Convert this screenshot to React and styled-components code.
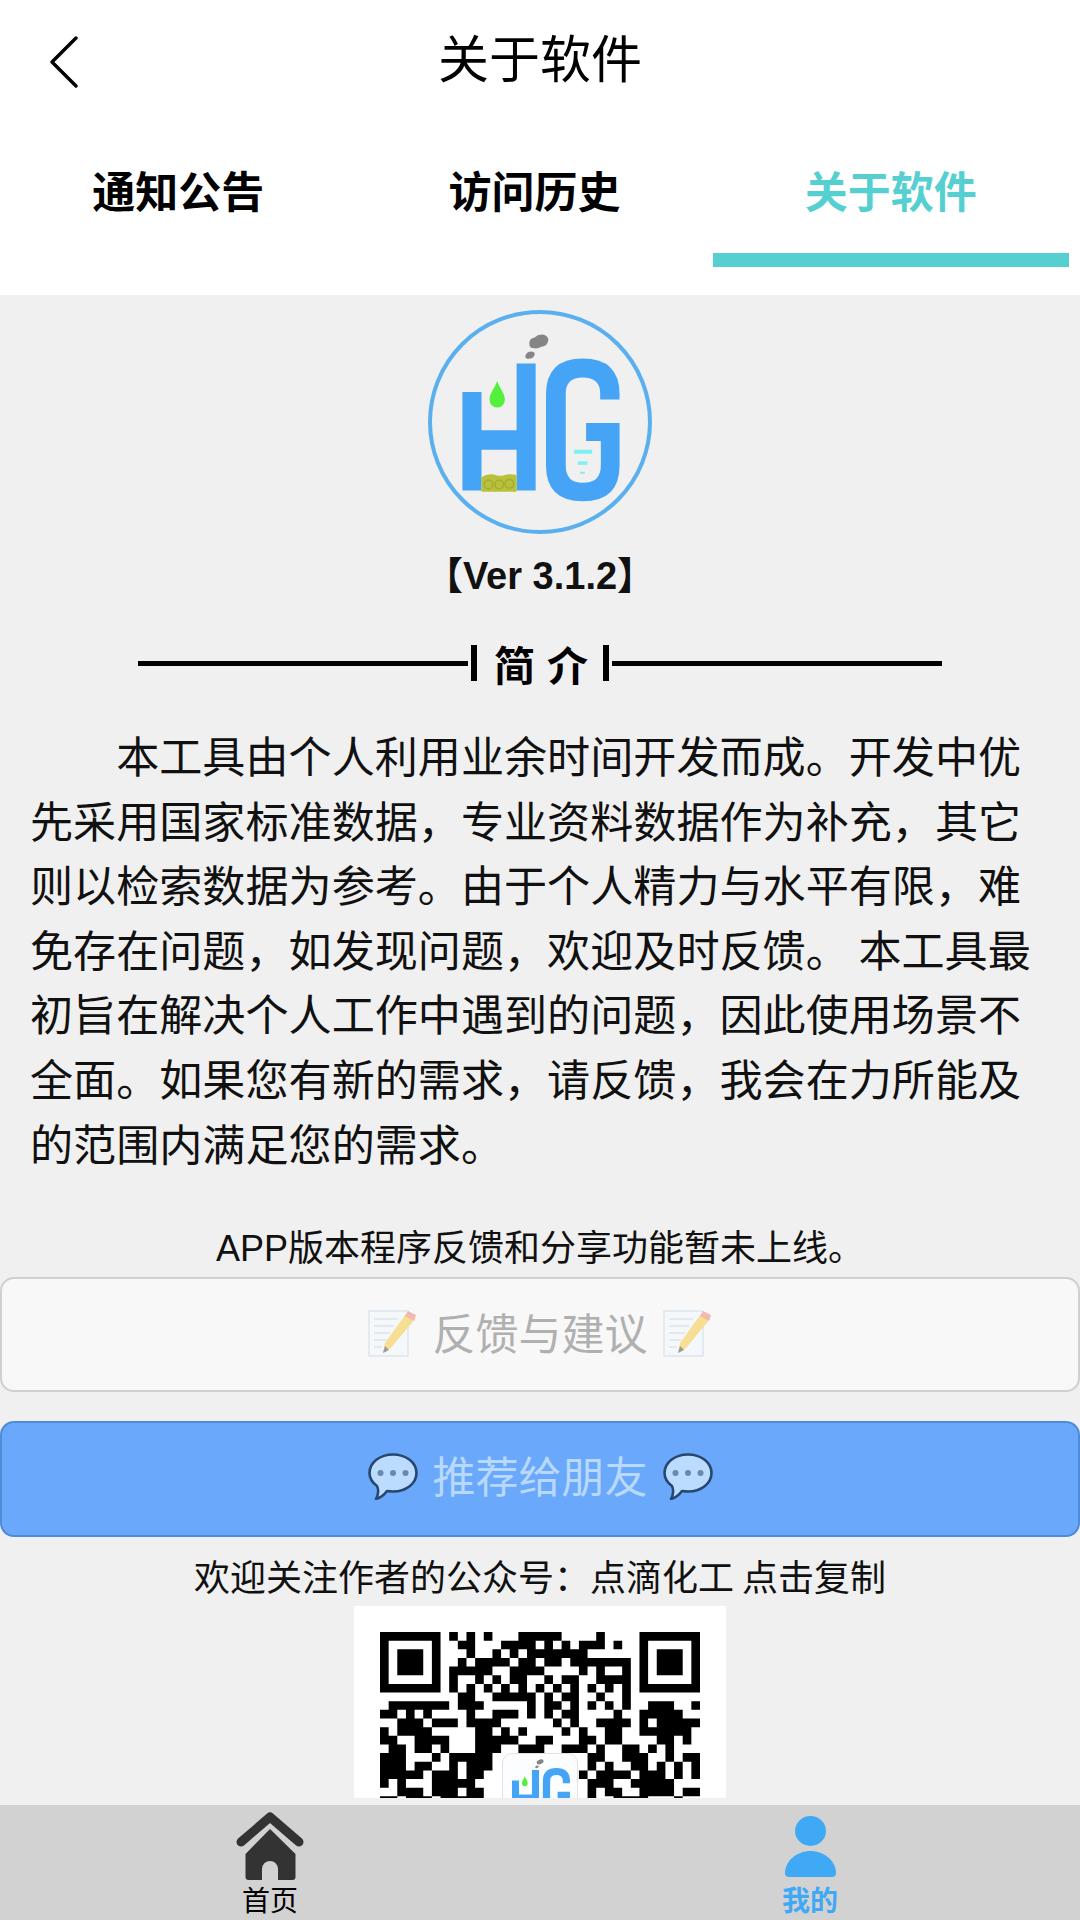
import React from 'react';
import styled, { createGlobalStyle } from 'styled-components';

const cjk = '"Noto Sans CJK SC", sans-serif';
const latinCjk = '"Liberation Sans", "Noto Sans CJK SC", sans-serif';

const GlobalStyle = createGlobalStyle`
  html, body {
    margin: 0;
    padding: 0;
    background: #f0f0f0;
  }
  * {
    box-sizing: border-box;
  }
`;

const Page = styled.div`
  width: 1080px;
  height: 1920px;
  display: flex;
  flex-direction: column;
  overflow: hidden;
  background: #f0f0f0;
  font-family: ${cjk};
  color: #000;
`;

const Header = styled.header`
  flex: none;
  height: 295px;
  background: #fff;
`;

const TitleBar = styled.div`
  height: 118px;
  display: grid;
  grid-template-columns: 1fr auto 1fr;
  align-items: center;
  padding: 0 50px;
`;

const BackIcon = styled.svg`
  width: 28px;
  height: 52px;
  margin-top: 6px;
`;

const Title = styled.h1`
  margin: 0 0 7px;
  font-size: 51px;
  line-height: 60px;
  font-weight: 400;
`;

const Tabs = styled.nav`
  width: 1069px;
  display: grid;
  grid-template-columns: repeat(3, 1fr);
`;

const Tab = styled.div`
  height: 149px;
  padding-top: 43px;
  text-align: center;
  font-size: 43px;
  line-height: 57px;
  font-weight: 700;
  color: ${(p) => (p.$active ? '#55cfd0' : '#000')};
  border-bottom: 14px solid ${(p) => (p.$active ? '#55cfd0' : 'transparent')};
`;

const Content = styled.main`
  flex: 1;
  min-height: 0;
  overflow: hidden;
  display: flex;
  flex-direction: column;
  align-items: center;
`;

const LogoBadge = styled.svg`
  flex: none;
  width: 224px;
  height: 224px;
  margin-top: 15px;
`;

const Version = styled.div`
  margin-top: 20px;
  font-family: ${latinCjk};
  font-size: 38px;
  line-height: 44px;
  font-weight: 700;
  color: #111;
`;

const Divider = styled.div`
  flex: none;
  height: 36px;
  margin-top: 47px;
  display: flex;
  align-items: center;
`;

const DividerLine = styled.span`
  width: 330px;
  height: 5px;
  background: #000;
`;

const DividerBar = styled.span`
  width: 6px;
  height: 36px;
  margin: 0 3px;
  background: #000;
`;

const DividerLabel = styled.span`
  margin: 0 14px;
  font-size: 41px;
  line-height: 36px;
  font-weight: 700;
  letter-spacing: 12px;
  margin-right: 0;
`;

const Intro = styled.p`
  width: 1020px;
  margin: 41px 0 0;
  font-size: 43.1px;
  line-height: 64.6px;
  text-indent: 2em;
  color: #111;
`;

const Notice = styled.div`
  margin-top: 52px;
  font-family: ${latinCjk};
  font-size: 36px;
  line-height: 46px;
  color: #111;
`;

const ActionButton = styled.div`
  flex: none;
  width: 1080px;
  height: ${(p) => (p.$primary ? '116px' : '115px')};
  margin-top: ${(p) => (p.$primary ? '29px' : '5px')};
  padding-bottom: ${(p) => (p.$primary ? '6px' : '3px')};
  display: flex;
  align-items: center;
  justify-content: center;
  gap: 15px;
  border-radius: 14px;
  border: 2px solid ${(p) => (p.$primary ? '#4f8bd6' : '#d0d0d0')};
  background: ${(p) => (p.$primary ? '#6aa8fb' : '#f8f8f8')};
  color: ${(p) => (p.$primary ? '#b9d9fb' : '#b0b0b0')};
  font-size: 43px;
  line-height: 60px;
`;

const ButtonLabel = styled.span`
  padding-bottom: 5px;
`;

const ButtonIcon = styled.svg`
  flex: none;
  width: 50px;
  height: 47px;
`;

const Follow = styled.div`
  margin-top: 16px;
  font-size: 36px;
  line-height: 44px;
  white-space: pre;
  color: #111;
`;

const QrCard = styled.div`
  position: relative;
  flex: none;
  width: 372px;
  height: 372px;
  margin-top: 9px;
  padding: 26px;
  background: #fff;
`;

const QrCode = styled.svg`
  display: block;
  width: 320px;
  height: 320px;
`;

const QrLogo = styled.div`
  position: absolute;
  left: 148px;
  top: 147px;
  width: 76px;
  height: 76px;
  border: 1px solid #e2e2e2;
  border-radius: 10px;
  background: #fbfdff;
`;

const QrLogoMark = styled.svg`
  display: block;
  width: 74px;
  height: 74px;
`;

const BottomBar = styled.footer`
  flex: none;
  height: 115px;
  margin-top: 7px;
  display: grid;
  grid-template-columns: 1fr 1fr;
  background: #d2d2d2;
`;

const BarItem = styled.div`
  display: flex;
  flex-direction: column;
  align-items: center;
  padding-top: 6px;
`;

const IconSlot = styled.div`
  height: 69px;
  display: flex;
  align-items: flex-start;
  justify-content: center;
`;

const HomeIcon = styled.svg`
  width: 68px;
  height: 70px;
`;

const PersonIcon = styled.svg`
  width: 51px;
  height: 61px;
  margin-top: 5px;
`;

const BarLabel = styled.span`
  font-size: 28px;
  line-height: 38px;
  font-weight: ${(p) => (p.$active ? 700 : 400)};
  color: ${(p) => (p.$active ? '#3fa9f5' : '#000')};
`;

// modules that are dark per row, read off the reference (rows below 19 are hidden)
const qrRows = [
  '0-6 8 10 12 16-20 25 30-36',
  '0 6 9-10 14-17 19 21 23-25 27 30 36',
  '0 2-4 6 10 13 15 17-23 30 32-34 36',
  '0 2-4 6 9 11-14 16-17 19-20 22-28 30 32-34 36',
  '0 2-4 6 8-12 15-18 23 25 28 30 32-34 36',
  '0 6 8 11 13 15-16 19 21-22 25-28 30 36',
  '0-6 8 10 12 14 16 18 20 22 24 26 28 30-36',
  '9-10 13-17 19 21-22 25 28',
  '1-7 9-11 17 19-20 22 24 26 28 31-33 36',
  '0-1 3 5 10 13-15 17 19 21-22 27 30-34',
  '2-4 6-8 10-13 20 22 25-28 30 32-36',
  '0 2-5 11-12 14 16 21 23 26-27 30-35',
  '0-1 4-7 11-15 18-19 23-24 26-27 32-33 35',
  '1-2 4-5 7 11-13 16-18 21-23 25 28-29 31 33',
  '0-2 6 8-12 24-25 28-30 33 35-36',
  '0-2 4-5 8 10-12 24 26 29-30 32 34 36',
  '0-4 6-8 10-11 23 25-28 30-32 34 36',
  '0 2 6-10 24-26 29-33',
  '2-4 6-8 10-11 24 26-27 30-33 35-36',
  '0-1 3-5 7-11 24 27-30 34',
];

const qrPath = qrRows
  .map((row, y) =>
    row
      .split(' ')
      .map((part) => {
        const [from, to = from] = part.split('-').map(Number);
        return `M${from} ${y}h${to - from + 1}v1h-${to - from + 1}z`;
      })
      .join('')
  )
  .join('');

const HgMark = () => (
  <>
    <path
      fill="#45a4f5"
      d="M188 305H245V420H350V220H407V600H350V478H245V600H188Z"
    />
    <path
      fill="#b9c13c"
      d="M245 604V560Q262 548 282 552Q298 558 312 554Q332 548 350 554V604Z"
    />
    <circle cx="266" cy="582" r="13" fill="none" stroke="#a3aa32" strokeWidth="4" />
    <circle cx="298" cy="582" r="13" fill="none" stroke="#a3aa32" strokeWidth="4" />
    <circle cx="328" cy="580" r="13" fill="none" stroke="#a3aa32" strokeWidth="4" />
    <path fill="#55f03c" d="M292 272C300 295 315 308 315 328A23 24 0 0 1 269 328C269 308 284 295 292 272Z" />
    <path
      fill="#858585"
      d="M388 160Q388 144 404 142Q416 130 432 134Q448 140 444 154Q440 168 424 170Q412 178 398 174Q388 172 388 160Z"
    />
    <path fill="#858585" d="M376 198Q378 186 392 184Q406 184 404 194Q400 206 386 206Q376 206 376 198Z" />
    <path
      fill="#45a4f5"
      d="M658 328H600V310Q600 262 548 262Q497 262 497 310V525Q497 577 548 577Q602 577 602 525V452H558V398H658V525Q658 632 548 632Q438 632 438 525V312Q438 205 548 205Q658 205 658 312Z"
    />
    <rect x="522" y="478" width="54" height="12" fill="#7ff0f0" />
    <rect x="533" y="513" width="29" height="10" fill="#7ff0f0" />
    <rect x="540" y="544" width="14" height="6" fill="#7ff0f0" />
  </>
);

const NoteIcon = () => (
  <ButtonIcon viewBox="0 0 50 47">
    <rect x="1" y="1" width="39" height="45" fill="#f4f8fb" stroke="#dbe6ee" strokeWidth="1.5" />
    <path d="M6 9H30M6 16H26M6 23H22M6 30H18M6 37H14" stroke="#dde3e8" strokeWidth="1.5" />
    <path d="M38 4L47 9L23 38L15 43L17 33Z" fill="#f6df92" />
    <path d="M40 1L48 5L46 11L37 6Z" fill="#f3b9b1" />
    <path d="M17 36L15 43L21 40Z" fill="#9a9a9a" />
  </ButtonIcon>
);

const BubbleIcon = () => (
  <ButtonIcon viewBox="0 0 50 47">
    <path
      fill="#bcdcff"
      stroke="#27486e"
      strokeWidth="2.6"
      strokeLinejoin="round"
      d="M9 33C3.5 29 1.5 25 1.5 20C1.5 9.5 12 1.5 25 1.5C38 1.5 48.5 9.5 48.5 20C48.5 30.5 38 38.5 25 38.5C23 38.5 21 38.3 19 38C16 42 12 45 8 46C10 43 11 37 9 33Z"
    />
    <circle cx="12.5" cy="20" r="3" fill="#6c88a8" />
    <circle cx="25" cy="20" r="3" fill="#6c88a8" />
    <circle cx="37.5" cy="20" r="3" fill="#6c88a8" />
  </ButtonIcon>
);

const App = () => {
  return (
    <Page>
      <GlobalStyle />
      <Header>
        <TitleBar>
          <BackIcon viewBox="0 0 28 52">
            <path d="M26 2L2 26L26 50" fill="none" stroke="#000" strokeWidth="3.4" strokeLinecap="round" strokeLinejoin="round" />
          </BackIcon>
          <Title>关于软件</Title>
        </TitleBar>
        <Tabs>
          <Tab>通知公告</Tab>
          <Tab>访问历史</Tab>
          <Tab $active>关于软件</Tab>
        </Tabs>
      </Header>
      <Content>
        <LogoBadge viewBox="85 60 670 670">
          <circle cx="420" cy="395" r="329" fill="none" stroke="#5ab0ee" strokeWidth="12" />
          <HgMark />
        </LogoBadge>
        <Version>【Ver 3.1.2】</Version>
        <Divider>
          <DividerLine />
          <DividerBar />
          <DividerLabel>简介</DividerLabel>
          <DividerBar />
          <DividerLine />
        </Divider>
        <Intro>
          本工具由个人利用业余时间开发而成。开发中优先采用国家标准数据，专业资料数据作为补充，其它则以检索数据为参考。由于个人精力与水平有限，难免存在问题，如发现问题，欢迎及时反馈。 本工具最初旨在解决个人工作中遇到的问题，因此使用场景不全面。如果您有新的需求，请反馈，我会在力所能及的范围内满足您的需求。
        </Intro>
        <Notice>APP版本程序反馈和分享功能暂未上线。</Notice>
        <ActionButton>
          <NoteIcon />
          <ButtonLabel>反馈与建议</ButtonLabel>
          <NoteIcon />
        </ActionButton>
        <ActionButton $primary>
          <BubbleIcon />
          <ButtonLabel>推荐给朋友</ButtonLabel>
          <BubbleIcon />
        </ActionButton>
        <Follow>欢迎关注作者的公众号：点滴化工 点击复制</Follow>
        <QrCard>
          <QrCode viewBox="0 0 37 37">
            <path d={qrPath} fill="#000" />
          </QrCode>
          <QrLogo>
            <QrLogoMark viewBox="115 91 600 600">
              <HgMark />
            </QrLogoMark>
          </QrLogo>
        </QrCard>
      </Content>
      <BottomBar>
        <BarItem>
          <IconSlot>
            <HomeIcon viewBox="0 0 68 70">
              <path d="M5 31L34 6L63 31" fill="none" stroke="#333" strokeWidth="9" strokeLinecap="round" strokeLinejoin="round" />
              <path
                fill="#333"
                fillRule="evenodd"
                d="M34 18L59.5 43V66Q59.5 69 56.5 69H12.5Q9.5 69 9.5 66V43ZM26 69V58A8 8 0 0 1 42 58V69Z"
              />
            </HomeIcon>
          </IconSlot>
          <BarLabel>首页</BarLabel>
        </BarItem>
        <BarItem>
          <IconSlot>
            <PersonIcon viewBox="0 0 51 61">
              <ellipse cx="25.5" cy="15" rx="15.5" ry="15" fill="#3fa9f5" />
              <path fill="#3fa9f5" d="M0 57C0 45 12 35 25.5 35C39 35 51 45 51 57Q51 61 47 61H4Q0 61 0 57Z" />
            </PersonIcon>
          </IconSlot>
          <BarLabel $active>我的</BarLabel>
        </BarItem>
      </BottomBar>
    </Page>
  );
};

export default App;
